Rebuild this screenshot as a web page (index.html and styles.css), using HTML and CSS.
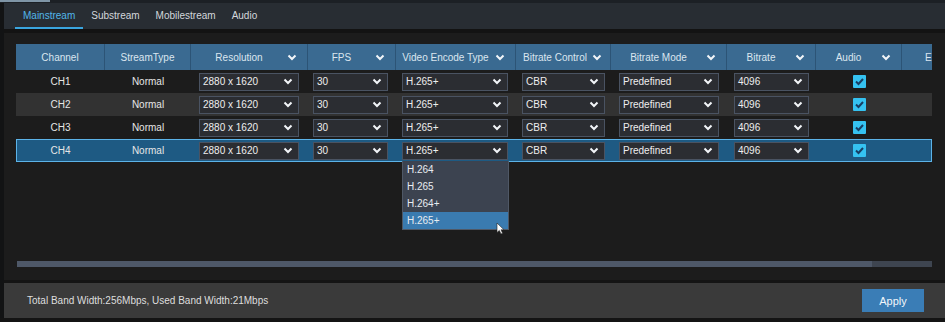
FILE: index.html
```html
<!DOCTYPE html>
<html>
<head>
<meta charset="utf-8">
<link rel="stylesheet" href="styles.css">
</head>
<body>
<div class="topstrip"><span class="topstrip-hl"></span></div>
<div class="page">
  <nav class="tabs">
    <span class="tab active">Mainstream</span>
    <span class="tab">Substream</span>
    <span class="tab">Mobilestream</span>
    <span class="tab">Audio</span>
  </nav>
  <div class="band"></div>
  <main class="content">
    <div class="table">
      <div class="row head">
        <div class="hc"><span class="hl">Channel</span></div>
        <div class="hc"><span class="hl">StreamType</span></div>
        <div class="hc"><span class="hl">Resolution</span><svg class="chev hchev" viewBox="0 0 10 7"><path d="M1.5 1.5 L5 5 L8.5 1.5"/></svg></div>
        <div class="hc"><span class="hl">FPS</span><svg class="chev hchev" viewBox="0 0 10 7"><path d="M1.5 1.5 L5 5 L8.5 1.5"/></svg></div>
        <div class="hc"><span class="hl">Video Encode Type</span><svg class="chev hchev" viewBox="0 0 10 7"><path d="M1.5 1.5 L5 5 L8.5 1.5"/></svg></div>
        <div class="hc"><span class="hl">Bitrate Control</span><svg class="chev hchev sm" viewBox="0 0 10 7"><path d="M1.5 1.5 L5 5 L8.5 1.5"/></svg></div>
        <div class="hc"><span class="hl">Bitrate Mode</span><svg class="chev hchev" viewBox="0 0 10 7"><path d="M1.5 1.5 L5 5 L8.5 1.5"/></svg></div>
        <div class="hc"><span class="hl">Bitrate</span><svg class="chev hchev" viewBox="0 0 10 7"><path d="M1.5 1.5 L5 5 L8.5 1.5"/></svg></div>
        <div class="hc"><span class="hl">Audio</span><svg class="chev hchev" viewBox="0 0 10 7"><path d="M1.5 1.5 L5 5 L8.5 1.5"/></svg></div>
        <div class="hc last"><span class="hl-left">E</span></div>
      </div>

      <div class="row">
        <div class="c">CH1</div><div class="c">Normal</div>
        <div class="c l"><div class="sel w-res">2880 x 1620<svg class="chev" viewBox="0 0 10 7"><path d="M1.5 1.5 L5 5 L8.5 1.5"/></svg></div></div>
        <div class="c l"><div class="sel w-fps">30<svg class="chev" viewBox="0 0 10 7"><path d="M1.5 1.5 L5 5 L8.5 1.5"/></svg></div></div>
        <div class="c l"><div class="sel w-vet">H.265+<svg class="chev" viewBox="0 0 10 7"><path d="M1.5 1.5 L5 5 L8.5 1.5"/></svg></div></div>
        <div class="c l"><div class="sel w-bc">CBR<svg class="chev" viewBox="0 0 10 7"><path d="M1.5 1.5 L5 5 L8.5 1.5"/></svg></div></div>
        <div class="c l"><div class="sel w-bm">Predefined<svg class="chev" viewBox="0 0 10 7"><path d="M1.5 1.5 L5 5 L8.5 1.5"/></svg></div></div>
        <div class="c l"><div class="sel w-br">4096<svg class="chev" viewBox="0 0 10 7"><path d="M1.5 1.5 L5 5 L8.5 1.5"/></svg></div></div>
        <div class="c"><span class="cb"><svg viewBox="0 0 13 13"><path d="M3 6.5 L5.5 9 L10 4"/></svg></span></div>
        <div class="c"></div>
      </div>

      <div class="row alt">
        <div class="c">CH2</div><div class="c">Normal</div>
        <div class="c l"><div class="sel w-res">2880 x 1620<svg class="chev" viewBox="0 0 10 7"><path d="M1.5 1.5 L5 5 L8.5 1.5"/></svg></div></div>
        <div class="c l"><div class="sel w-fps">30<svg class="chev" viewBox="0 0 10 7"><path d="M1.5 1.5 L5 5 L8.5 1.5"/></svg></div></div>
        <div class="c l"><div class="sel w-vet">H.265+<svg class="chev" viewBox="0 0 10 7"><path d="M1.5 1.5 L5 5 L8.5 1.5"/></svg></div></div>
        <div class="c l"><div class="sel w-bc">CBR<svg class="chev" viewBox="0 0 10 7"><path d="M1.5 1.5 L5 5 L8.5 1.5"/></svg></div></div>
        <div class="c l"><div class="sel w-bm">Predefined<svg class="chev" viewBox="0 0 10 7"><path d="M1.5 1.5 L5 5 L8.5 1.5"/></svg></div></div>
        <div class="c l"><div class="sel w-br">4096<svg class="chev" viewBox="0 0 10 7"><path d="M1.5 1.5 L5 5 L8.5 1.5"/></svg></div></div>
        <div class="c"><span class="cb"><svg viewBox="0 0 13 13"><path d="M3 6.5 L5.5 9 L10 4"/></svg></span></div>
        <div class="c"></div>
      </div>

      <div class="row">
        <div class="c">CH3</div><div class="c">Normal</div>
        <div class="c l"><div class="sel w-res">2880 x 1620<svg class="chev" viewBox="0 0 10 7"><path d="M1.5 1.5 L5 5 L8.5 1.5"/></svg></div></div>
        <div class="c l"><div class="sel w-fps">30<svg class="chev" viewBox="0 0 10 7"><path d="M1.5 1.5 L5 5 L8.5 1.5"/></svg></div></div>
        <div class="c l"><div class="sel w-vet">H.265+<svg class="chev" viewBox="0 0 10 7"><path d="M1.5 1.5 L5 5 L8.5 1.5"/></svg></div></div>
        <div class="c l"><div class="sel w-bc">CBR<svg class="chev" viewBox="0 0 10 7"><path d="M1.5 1.5 L5 5 L8.5 1.5"/></svg></div></div>
        <div class="c l"><div class="sel w-bm">Predefined<svg class="chev" viewBox="0 0 10 7"><path d="M1.5 1.5 L5 5 L8.5 1.5"/></svg></div></div>
        <div class="c l"><div class="sel w-br">4096<svg class="chev" viewBox="0 0 10 7"><path d="M1.5 1.5 L5 5 L8.5 1.5"/></svg></div></div>
        <div class="c"><span class="cb"><svg viewBox="0 0 13 13"><path d="M3 6.5 L5.5 9 L10 4"/></svg></span></div>
        <div class="c"></div>
      </div>

      <div class="row selected">
        <div class="c">CH4</div><div class="c">Normal</div>
        <div class="c l"><div class="sel w-res">2880 x 1620<svg class="chev" viewBox="0 0 10 7"><path d="M1.5 1.5 L5 5 L8.5 1.5"/></svg></div></div>
        <div class="c l"><div class="sel w-fps">30<svg class="chev" viewBox="0 0 10 7"><path d="M1.5 1.5 L5 5 L8.5 1.5"/></svg></div></div>
        <div class="c l"><div class="sel w-vet">H.265+<svg class="chev" viewBox="0 0 10 7"><path d="M1.5 1.5 L5 5 L8.5 1.5"/></svg></div></div>
        <div class="c l"><div class="sel w-bc">CBR<svg class="chev" viewBox="0 0 10 7"><path d="M1.5 1.5 L5 5 L8.5 1.5"/></svg></div></div>
        <div class="c l"><div class="sel w-bm">Predefined<svg class="chev" viewBox="0 0 10 7"><path d="M1.5 1.5 L5 5 L8.5 1.5"/></svg></div></div>
        <div class="c l"><div class="sel w-br">4096<svg class="chev" viewBox="0 0 10 7"><path d="M1.5 1.5 L5 5 L8.5 1.5"/></svg></div></div>
        <div class="c"><span class="cb"><svg viewBox="0 0 13 13"><path d="M3 6.5 L5.5 9 L10 4"/></svg></span></div>
        <div class="c"></div>
      </div>

      <ul class="dropdown">
        <li>H.264</li>
        <li>H.265</li>
        <li>H.264+</li>
        <li class="hi">H.265+</li>
      </ul>
      <svg class="cursor" viewBox="0 0 9 13"><path d="M1 1 L1 10.5 L3.3 8.4 L5 12 L6.6 11.3 L5 7.8 L8 7.8 Z"/></svg>
    </div>

    <div class="scroll"><div class="thumb"></div></div>
  </main>
  <div class="sep"></div>
  <footer class="footer">
    <span class="bw">Total Band Width:256Mbps, Used Band Width:21Mbps</span>
    <button class="apply">Apply</button>
  </footer>
</div>
</body>
</html>
```

FILE: styles.css
```css
* { box-sizing: border-box; }
html, body { margin: 0; padding: 0; }
body {
  width: 945px;
  height: 322px;
  overflow: hidden;
  background: #141414;
  font-family: "Liberation Sans", Arial, sans-serif;
  font-size: 10px;
  color: #e6e6e6;
}
.topstrip {
  height: 3px;
  background: #1c2025;
  display: flex;
}
.topstrip-hl {
  width: 50px;
  height: 2px;
  background: #7f95a6;
}
.page {
  padding-left: 4px;
  background: #121314;
}
.tabs {
  height: 26px;
  background: #282d33;
  display: flex;
  padding-left: 11px;
}
.tab {
  padding: 0 8px;
  height: 26px;
  line-height: 25px;
  color: #d3d7dc;
  font-size: 10px;
  border-bottom: 2px solid transparent;
}
.tab.active {
  color: #52b6ea;
  border-bottom-color: #3aa5df;
}
.band {
  height: 4px;
  background: #131313;
}
.content {
  height: 247px;
  background: #1c1c1c;
  padding: 11px 13px 0 12px;
}
.table {
  position: relative;
  width: 916px;
}
.row {
  display: grid;
  grid-template-columns: 89px 86px 117px 88px 120px 95px 116px 89px 86px 30px;
  height: 23px;
}
.row.head {
  height: 26px;
  background: #3a6a91;
}
.row.alt { background: #323232; }
.row.selected {
  background: #1e5a83;
  box-shadow: inset 0 0 0 1px #5cb3e8;
}
.hc {
  display: flex;
  align-items: center;
  border-right: 1px solid #2c5476;
  color: #dbe6ef;
  height: 26px;
  white-space: nowrap;
}
.hc.last {
  border-right: none;
  overflow: hidden;
}
.hl { flex: 1; text-align: center; }
.hl-left { padding-left: 23px; }
.chev {
  width: 10px;
  height: 7px;
  fill: none;
  stroke: #f2f5f8;
  stroke-width: 2;
  flex: none;
}
.hchev { margin-right: 10px; }
.hchev.sm { margin-right: 8px; margin-left: -2px; }
.c {
  display: flex;
  align-items: center;
  justify-content: center;
  color: #e6e6e6;
}
.c.l { justify-content: flex-start; }
.sel {
  height: 18px;
  display: flex;
  align-items: center;
  justify-content: space-between;
  padding: 0 5px 0 3px;
  background: #2b2d32;
  border: 1px solid #4a5362;
  color: #eeeeee;
}
.w-res { margin-left: 8px; width: 100px; }
.w-fps { margin-left: 5px; width: 75px; }
.w-vet { margin-left: 6px; width: 106px; }
.w-bc  { margin-left: 6px; width: 83px; }
.w-bm  { margin-left: 8px; width: 100px; }
.w-br  { margin-left: 7px; width: 75px; }
.cb {
  width: 13px;
  height: 13px;
  background: #35c2f1;
  border-radius: 1px;
  display: block;
}
.cb svg {
  width: 13px;
  height: 13px;
  display: block;
  fill: none;
  stroke: #173e63;
  stroke-width: 2;
}
.dropdown {
  position: absolute;
  top: 117px;
  left: 386px;
  width: 107px;
  margin: 0;
  padding: 0;
  list-style: none;
  background: #3c4350;
  border: 1px solid #4f5866;
  border-top: none;
}
.dropdown li {
  height: 17px;
  line-height: 17px;
  padding-left: 4px;
  color: #e8ecf0;
}
.dropdown li.hi { background: #3a7bb0; }
.cursor {
  position: absolute;
  top: 178px;
  left: 480px;
  width: 9px;
  height: 13px;
  fill: #ffffff;
  stroke: #222;
  stroke-width: 0.6;
}
.scroll {
  margin-top: 99px;
  margin-left: 1px;
  width: 915px;
  height: 6px;
  background: #3e4550;
  display: flex;
}
.thumb {
  width: 855px;
  height: 6px;
  background: #4e5868;
}
.sep {
  height: 3px;
  background: #141414;
}
.footer {
  height: 35px;
  background: #3a3a3a;
  display: flex;
  align-items: center;
  justify-content: space-between;
  padding: 0 21px 0 23px;
}
.bw { color: #dedede; font-size: 10px; }
.apply {
  width: 62px;
  height: 23px;
  border: none;
  background: #3a7db6;
  color: #f2f6fa;
  font-family: "Liberation Sans", Arial, sans-serif;
  font-size: 11px;
  padding: 0;
}
```
